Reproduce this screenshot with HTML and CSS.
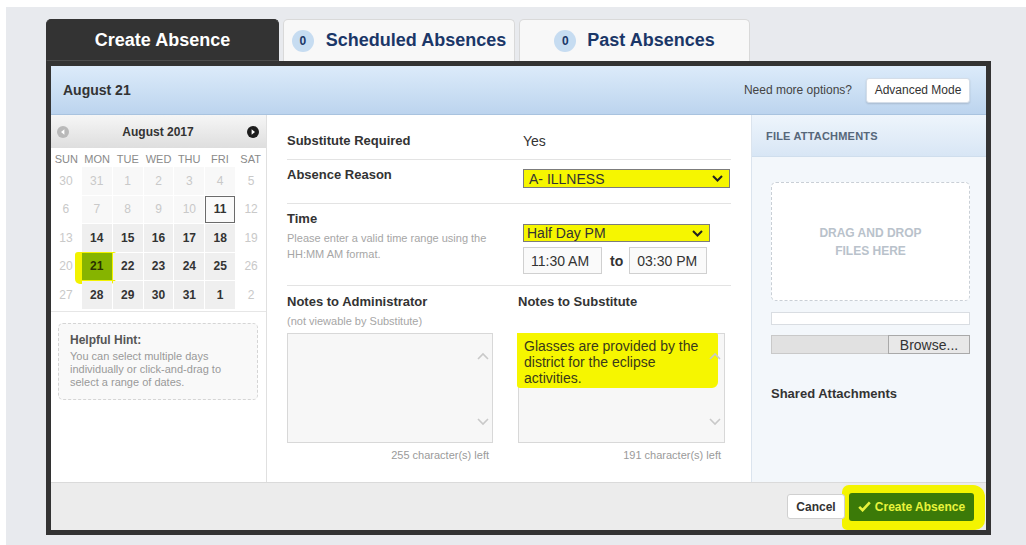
FILE: index.html
```html
<!DOCTYPE html>
<html lang="en">
<head>
<meta charset="utf-8">
<title>Create Absence</title>
<link rel="stylesheet" href="styles.css">
</head>
<body>
<div class="page">
  <nav class="tabs">
    <div class="tab tab-active">Create Absence</div>
    <div class="tab tab-scheduled"><span class="badge">0</span>Scheduled Absences</div>
    <div class="tab tab-past"><span class="badge">0</span>Past Absences</div>
  </nav>

  <section class="frame">
    <header class="frame-head">
      <h1 class="date-title">August 21</h1>
      <div class="head-actions">
        <span class="more">Need more options?</span>
        <button class="btn-adv" type="button">Advanced Mode</button>
      </div>
    </header>

    <div class="frame-body">
      <!-- calendar -->
      <aside class="cal-col">
        <div class="cal-head">
          <svg class="cal-nav" width="12" height="12" viewBox="0 0 12 12"><circle cx="6" cy="6" r="6" fill="#b9b9b9"/><path d="M7.4 3.2 L4 6 L7.4 8.8 Z" fill="#fff"/></svg>
          <span>August 2017</span>
          <svg class="cal-nav" width="12" height="12" viewBox="0 0 12 12"><circle cx="6" cy="6" r="6" fill="#1c1c1c"/><path d="M4.6 3.2 L8 6 L4.6 8.8 Z" fill="#fff"/></svg>
        </div>
        <div class="cal-dow">
          <span>SUN</span><span>MON</span><span>TUE</span><span>WED</span><span>THU</span><span>FRI</span><span>SAT</span>
        </div>
        <div class="cal-grid">
          <span class="d off">30</span><span class="d dim">31</span><span class="d dim">1</span><span class="d dim">2</span><span class="d dim">3</span><span class="d dim">4</span><span class="d off">5</span>
          <span class="d off">6</span><span class="d dim">7</span><span class="d dim">8</span><span class="d dim">9</span><span class="d dim">10</span><span class="d today">11</span><span class="d off">12</span>
          <span class="d off">13</span><span class="d on">14</span><span class="d on">15</span><span class="d on">16</span><span class="d on">17</span><span class="d on">18</span><span class="d off">19</span>
          <span class="d off">20</span><span class="d sel">21</span><span class="d on">22</span><span class="d on">23</span><span class="d on">24</span><span class="d on">25</span><span class="d off">26</span>
          <span class="d off">27</span><span class="d on">28</span><span class="d on">29</span><span class="d on">30</span><span class="d on">31</span><span class="d on">1</span><span class="d off">2</span>
        </div>
        <div class="hint">
          <div class="hint-title">Helpful Hint:</div>
          <p class="hint-text">You can select multiple days individually or click-and-drag to select a range of dates.</p>
        </div>
      </aside>

      <!-- absence form -->
      <div class="form-col">
        <div class="row row-sub">
          <div class="label">Substitute Required</div>
          <div class="value">Yes</div>
        </div>
        <div class="row row-reason">
          <div class="label">Absence Reason</div>
          <div class="select select-reason">
            <span>A- ILLNESS</span>
            <svg width="11" height="7" viewBox="0 0 11 7"><path d="M1 1 L5.5 5.5 L10 1" fill="none" stroke="#222" stroke-width="2"/></svg>
          </div>
        </div>
        <div class="row row-time">
          <div>
            <div class="label">Time</div>
            <p class="help">Please enter a valid time range using the HH:MM AM format.</p>
          </div>
          <div>
            <div class="select select-time">
              <span>Half Day PM</span>
              <svg width="11" height="7" viewBox="0 0 11 7"><path d="M1 1 L5.5 5.5 L10 1" fill="none" stroke="#222" stroke-width="2"/></svg>
            </div>
            <div class="time-range">
              <span class="time-input">11:30 AM</span>
              <span class="to">to</span>
              <span class="time-input time-end">03:30 PM</span>
            </div>
          </div>
        </div>
        <div class="notes">
          <div class="note">
            <div class="label">Notes to Administrator</div>
            <div class="help note-sub">(not viewable by Substitute)</div>
            <div class="textbox">
              <div class="scroll">
                <svg width="12" height="8" viewBox="0 0 12 8"><path d="M1 7 L6 2 L11 7" fill="none" stroke="#c9c9c9" stroke-width="1.6"/></svg>
                <svg width="12" height="8" viewBox="0 0 12 8"><path d="M1 1 L6 6 L11 1" fill="none" stroke="#c9c9c9" stroke-width="1.6"/></svg>
              </div>
            </div>
            <div class="count">255 character(s) left</div>
          </div>
          <div class="note">
            <div class="label">Notes to Substitute</div>
            <div class="help note-sub">&nbsp;</div>
            <div class="textbox">
              <div class="note-text">Glasses are provided by the district for the eclipse activities.</div>
              <div class="scroll">
                <svg width="12" height="8" viewBox="0 0 12 8"><path d="M1 7 L6 2 L11 7" fill="none" stroke="#c9c9c9" stroke-width="1.6"/></svg>
                <svg width="12" height="8" viewBox="0 0 12 8"><path d="M1 1 L6 6 L11 1" fill="none" stroke="#c9c9c9" stroke-width="1.6"/></svg>
              </div>
            </div>
            <div class="count">191 character(s) left</div>
          </div>
        </div>
      </div>

      <!-- attachments -->
      <aside class="files-col">
        <div class="files-head">FILE ATTACHMENTS</div>
        <div class="files-body">
          <div class="drop">DRAG AND DROP<br>FILES HERE</div>
          <div class="progress"></div>
          <div class="browse">
            <span class="browse-field"></span>
            <span class="browse-btn">Browse...</span>
          </div>
          <div class="shared">Shared Attachments</div>
        </div>
      </aside>
    </div>

    <footer class="frame-foot">
      <button class="btn-cancel" type="button">Cancel</button>
      <button class="btn-create" type="button">
        <svg width="13" height="11" viewBox="0 0 13 11"><path d="M1.2 5.8 L4.6 9.2 L11.8 1.4" fill="none" stroke="#eaf43c" stroke-width="2.6"/></svg>
        Create Absence
      </button>
    </footer>
  </section>
</div>
</body>
</html>
```

FILE: styles.css
```css
* { box-sizing: border-box; }

body {
  margin: 0;
  background: #fff;
  font-family: "Liberation Sans", Arial, sans-serif;
  color: #333;
}

button { font-family: inherit; cursor: pointer; }

.page {
  margin: 7px 0 0 6px;
  height: 538px;
  padding: 12px 0 0 40px;
  background: #e8eaee;
}

/* ---------- tabs ---------- */
.tabs {
  display: flex;
  gap: 4px;
  height: 42px;
}

.tab {
  width: 232px;
  display: flex;
  align-items: center;
  justify-content: center;
  gap: 12px;
  background: #f8f8f8;
  border: 1px solid #d9d9d9;
  border-bottom: none;
  border-radius: 5px 5px 0 0;
  font-size: 18px;
  font-weight: bold;
  color: #1b3768;
}

.tab-active {
  width: 233px;
  background: #333;
  border-color: #333;
  border-bottom: 1px solid #4c4c4c;
  color: #fff;
}

.tab-past { width: 231px; gap: 11px; }

.badge {
  width: 22px;
  height: 22px;
  border-radius: 50%;
  background: #c6dcf1;
  display: flex;
  align-items: center;
  justify-content: center;
  font-size: 12px;
}

/* ---------- frame ---------- */
.frame {
  width: 945px;
  height: 474px;
  border: 5px solid #333;
  background: #fff;
  display: flex;
  flex-direction: column;
}

.frame-head {
  height: 49px;
  flex: none;
  display: flex;
  align-items: center;
  justify-content: space-between;
  padding: 0 16px 0 12px;
  background: linear-gradient(#dcebfa, #bcd4ee);
  border-bottom: 1px solid #a9c3df;
}

.date-title {
  margin: 0;
  font-size: 14px;
  font-weight: bold;
  color: #333;
}

.head-actions {
  display: flex;
  align-items: center;
  gap: 14px;
}

.more { font-size: 12px; color: #444; }

.btn-adv {
  width: 104px;
  height: 25px;
  background: #fff;
  border: 1px solid #d4dde8;
  border-radius: 3px;
  box-shadow: 0 1px 2px rgba(0, 0, 0, .14);
  font-size: 12px;
  color: #333;
  padding: 0;
}

.frame-body {
  height: 367px;
  flex: none;
  display: grid;
  grid-template-columns: 216px 484px 235px;
}

/* ---------- calendar ---------- */
.cal-col { border-right: 1px solid #e0e0e0; }

.cal-head {
  height: 33px;
  display: flex;
  align-items: center;
  justify-content: space-between;
  padding: 0 7px 0 6px;
  background: linear-gradient(#f6f6f6, #dedede);
  font-size: 12px;
  font-weight: bold;
  color: #333;
}

.cal-nav { display: block; }

.cal-dow {
  height: 19px;
  padding-top: 3px;
  display: grid;
  grid-template-columns: repeat(7, 1fr);
  align-items: center;
  text-align: center;
  font-size: 11px;
  color: #8a8a8a;
}

.cal-grid {
  position: relative;
  z-index: 0;
  display: grid;
  grid-template-columns: repeat(7, 1fr);
  grid-auto-rows: 27.5px;
  gap: 1px;
  padding-bottom: 2.5px;
  border-bottom: 1px solid #e6e6e6;
}

.d {
  display: flex;
  align-items: center;
  justify-content: center;
  font-size: 12px;
  color: #c9c9c9;
}

.dim { background: #f8f8f8; }

.on {
  background: #efefef;
  color: #333;
  font-weight: bold;
}

.today {
  border: 1px solid #6b6b6b;
  background: #fafafa;
  color: #333;
  font-weight: bold;
}

.sel {
  position: relative;
  background: #86b400;
  color: #2b3300;
  font-weight: bold;
}

.sel::before {
  content: "";
  position: absolute;
  inset: -1px -4px -4px -7px;
  background: #f2f200;
  border-radius: 3px 2px 6px 5px;
  z-index: -1;
}

.hint {
  height: 77px;
  margin: 11px 8px 0 7px;
  padding: 9px 11px 0;
  border: 1px dashed #d5d5d5;
  border-radius: 5px;
  background: #f9f9f9;
}

.hint-title {
  font-size: 12px;
  line-height: 14px;
  font-weight: bold;
  color: #555;
}

.hint-text {
  margin: 3px 0 0;
  font-size: 11px;
  line-height: 13px;
  color: #9a9a9a;
}

/* ---------- form ---------- */
.form-col { padding: 0 20px; }

.row {
  display: grid;
  grid-template-columns: 236px 1fr;
  align-items: start;
  border-bottom: 1px solid #e3e3e3;
}

.label {
  font-size: 13px;
  line-height: 16px;
  font-weight: bold;
  color: #333;
}

.value { font-size: 14px; line-height: 16px; color: #333; }

.row-sub { height: 45px; padding-top: 18px; }
.row-reason { height: 44px; padding-top: 7px; }
.row-time { height: 82px; padding-top: 7px; }

.help {
  margin: 3px 0 0;
  font-size: 11px;
  line-height: 16px;
  color: #a6a6a6;
}

.select {
  display: flex;
  align-items: center;
  justify-content: space-between;
  border: 1px solid #7c7c7c;
  background: #f6f600;
  font-size: 14px;
  color: #333;
}

.select-reason {
  width: 207px;
  height: 19px;
  margin-top: 2px;
  padding: 0 6px 0 5px;
}

.select-time {
  width: 187px;
  height: 18px;
  margin-top: 13px;
  padding: 0 6px 0 3px;
}

.time-range {
  display: flex;
  align-items: center;
  margin-top: 5px;
}

.time-input {
  width: 79px;
  height: 27px;
  display: flex;
  align-items: center;
  padding-left: 7px;
  border: 1px solid #d0d0d0;
  background: #fafafa;
  font-size: 14px;
  color: #333;
}

.time-end { width: 78px; }

.to {
  margin: 0 6px 0 8px;
  font-size: 14px;
  font-weight: bold;
}

.notes {
  display: grid;
  grid-template-columns: 206px 207px;
  column-gap: 25px;
  padding-top: 8px;
}

.note-sub { margin-top: 3px; }

.textbox {
  position: relative;
  height: 110px;
  margin-top: 4px;
  border: 1px solid #d8d8d8;
  background: #f7f7f7;
}

.scroll {
  position: absolute;
  top: 0;
  right: 0;
  bottom: 0;
  width: 19px;
  display: flex;
  flex-direction: column;
  justify-content: space-between;
  align-items: center;
  padding: 18px 0 16px;
}

.note-text {
  margin: -1px 6px 0 -2px;
  padding: 5px 8px 2px 7px;
  background: #f6f600;
  border-radius: 0 2px 6px 3px;
  font-size: 14px;
  line-height: 16px;
  color: #3a3a1a;
}

.count {
  margin-top: 5px;
  padding-right: 4px;
  text-align: right;
  font-size: 11px;
  line-height: 14px;
  color: #9a9a9a;
}

/* ---------- attachments ---------- */
.files-col {
  background: #f3f7fb;
  border-left: 1px solid #dbe4ee;
}

.files-head {
  height: 42px;
  display: flex;
  align-items: center;
  padding-left: 14px;
  background: linear-gradient(#eef5fc, #d8e6f5);
  border-bottom: 1px solid #cfdeed;
  font-size: 11px;
  font-weight: bold;
  letter-spacing: .2px;
  color: #56677a;
}

.files-body { padding: 25px 16px 0 19px; }

.drop {
  height: 119px;
  display: flex;
  align-items: center;
  justify-content: center;
  text-align: center;
  border: 1px dashed #c9cfd6;
  border-radius: 5px;
  background: #fff;
  font-size: 12px;
  line-height: 18px;
  font-weight: bold;
  color: #b9c2cb;
}

.progress {
  height: 13px;
  margin-top: 11px;
  border: 1px solid #d9dde2;
  background: #fff;
}

.browse {
  display: flex;
  height: 19px;
  margin-top: 10px;
}

.browse-field {
  flex: 1;
  background: #e1e1e1;
  border: 1px solid #c9c9c9;
  border-right: none;
}

.browse-btn {
  width: 82px;
  display: flex;
  align-items: center;
  justify-content: center;
  background: #e8e8e8;
  border: 1px solid #a9a9a9;
  font-size: 14px;
  color: #333;
}

.shared {
  margin-top: 32px;
  font-size: 13px;
  line-height: 16px;
  font-weight: bold;
  color: #333;
}

/* ---------- footer ---------- */
.frame-foot {
  position: relative;
  z-index: 0;
  flex: 1;
  display: flex;
  align-items: center;
  justify-content: flex-end;
  gap: 4px;
  padding-right: 12px;
  background: #ececec;
  border-top: 1px solid #dadada;
}

.btn-cancel {
  width: 58px;
  height: 25px;
  padding: 0;
  background: #fff;
  border: 1px solid #d0d0d0;
  border-radius: 3px;
  font-size: 12px;
  font-weight: bold;
  color: #333;
}

.btn-create {
  position: relative;
  width: 125px;
  height: 28px;
  padding: 0;
  display: inline-flex;
  align-items: center;
  justify-content: center;
  gap: 4px;
  background: #3b7a08;
  border: none;
  border-radius: 3px;
  font-size: 12px;
  font-weight: bold;
  color: #eaf43c;
}

.btn-create::before {
  content: "";
  position: absolute;
  inset: -8px -11px -9px -7px;
  background: #f4f400;
  border-radius: 7px 12px 10px 5px;
  z-index: -1;
}
```
